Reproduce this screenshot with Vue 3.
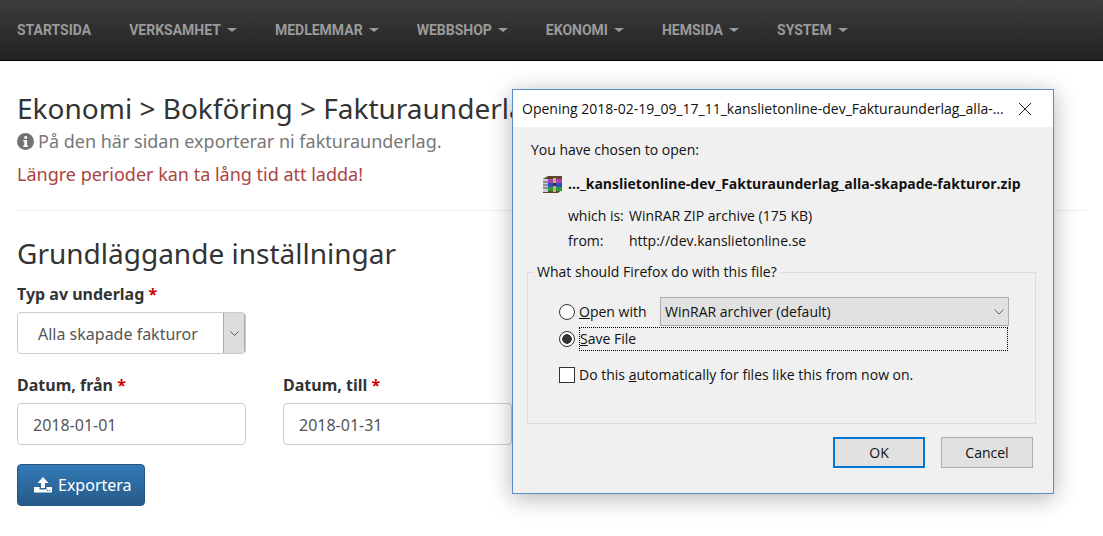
<script setup>
const navItems = [
  { label: 'STARTSIDA', caret: false },
  { label: 'VERKSAMHET', caret: true },
  { label: 'MEDLEMMAR', caret: true },
  { label: 'WEBBSHOP', caret: true },
  { label: 'EKONOMI', caret: true },
  { label: 'HEMSIDA', caret: true },
  { label: 'SYSTEM', caret: true },
]
</script>

<template>
  <div class="page">
    <nav class="navbar">
      <a v-for="item in navItems" :key="item.label" class="nav-link">
        {{ item.label }}<span v-if="item.caret" class="caret"></span>
      </a>
    </nav>

    <main class="content">
      <h1 class="title">Ekonomi &gt; Bokföring &gt; Fakturaunderlag</h1>
      <p class="lead">
        <svg class="info" viewBox="0 0 16 16" width="17" height="17">
          <circle cx="8" cy="8" r="8" fill="#737373" />
          <rect x="6.9" y="3" width="2.5" height="2.4" fill="#fff" />
          <path d="M5.9 6.5h3.5v5.2h1v1.4H5.9v-1.4h1V8H5.9z" fill="#fff" />
        </svg>
        På den här sidan exporterar ni fakturaunderlag.
      </p>
      <p class="warn">Längre perioder kan ta lång tid att ladda!</p>
      <hr class="rule" />
      <h2 class="section">Grundläggande inställningar</h2>

      <div class="field">
        <label class="label">Typ av underlag <span class="req">*</span></label>
        <div class="select">
          <span class="select-value">Alla skapade fakturor</span>
          <span class="select-arrow">
            <svg width="9" height="5" viewBox="0 0 9 5"><path d="M.5.5l4 4 4-4" fill="none" stroke="#555" /></svg>
          </span>
        </div>
      </div>

      <div class="dates">
        <div>
          <label class="label">Datum, från <span class="req">*</span></label>
          <div class="input">2018-01-01</div>
        </div>
        <div>
          <label class="label">Datum, till <span class="req">*</span></label>
          <div class="input">2018-01-31</div>
        </div>
      </div>

      <button class="btn">
        <svg width="18" height="16" viewBox="0 0 18 16">
          <path d="M9 0l5.5 6H11v5H7V6H3.500z" fill="#fff" />
          <path d="M0 10h5.500v2.500h7V10H18v5.500H0z" fill="#fff" />
          <rect x="13" y="13" width="1.200" height="1" fill="#2a6496" />
          <rect x="15" y="13" width="1.200" height="1" fill="#2a6496" />
        </svg>
        Exportera
      </button>
    </main>

    <section class="dialog">
      <header class="dlg-title">
        <span>Opening 2018-02-19_09_17_11_kanslietonline-dev_Fakturaunderlag_alla-...</span>
        <svg width="14" height="14" viewBox="0 0 14 14" class="dlg-close">
          <path d="M1 1l12 12M13 1L1 13" stroke="#222" stroke-width="1" fill="none" />
        </svg>
      </header>
      <div class="dlg-body">
        <p class="chosen">You have chosen to open:</p>
        <div class="file">
          <svg width="21" height="17" viewBox="0 0 21 17" class="rar">
            <path d="M1 3l5-3h14v14l-4 3H1z" fill="#5b4630" />
            <rect x="1" y="3" width="5" height="13" fill="#c9ccd6" />
            <path d="M1 6h5M1 9h5M1 12h5" stroke="#555" />
            <rect x="6" y="3" width="14" height="4" fill="#b03fb0" />
            <rect x="6" y="7" width="14" height="4" fill="#2f4fc0" />
            <rect x="6" y="11" width="14" height="4" fill="#2c9a3c" />
            <rect x="11" y="2" width="3" height="14" fill="#c8b070" />
            <rect x="11" y="7" width="3" height="3" fill="#3d3320" />
          </svg>
          <strong>..._kanslietonline-dev_Fakturaunderlag_alla-skapade-fakturor.zip</strong>
        </div>
        <div class="meta"><span class="meta-k">which is:</span><span>WinRAR ZIP archive (175 KB)</span></div>
        <div class="meta"><span class="meta-k">from:</span><span>http://dev.kanslietonline.se</span></div>

        <fieldset class="group">
          <legend class="legend">What should Firefox do with this file?</legend>
          <div class="row">
            <span class="radio"></span>
            <span class="opt"><u>O</u>pen with</span>
            <span class="combo">
              <span>WinRAR archiver (default)</span>
              <svg width="10" height="6" viewBox="0 0 10 6"><path d="M.5.5L5 5 9.500.5" fill="none" stroke="#666" /></svg>
            </span>
          </div>
          <div class="row row-save">
            <span class="radio radio-on"></span>
            <span class="focus"><u>S</u>ave File</span>
          </div>
          <div class="row row-check">
            <span class="check"></span>
            <span>Do this <u>a</u>utomatically for files like this from now on.</span>
          </div>
        </fieldset>

        <div class="actions">
          <span class="dbtn dbtn-ok">OK</span>
          <span class="dbtn">Cancel</span>
        </div>
      </div>
    </section>
  </div>
</template>

<style>
html, body { margin: 0; background: #fff; overflow: hidden; }
</style>

<style scoped>
.page {
  position: relative;
  width: 1103px;
  height: 536px;
  overflow: hidden;
  font-family: "Noto Sans", sans-serif;
  color: #333;
}
.navbar {
  display: flex;
  align-items: center;
  height: 60px;
  padding-left: 17px;
  gap: 38px;
  background: linear-gradient(#3c3c3c, #222);
  border-bottom: 1px solid #000;
}
.nav-link {
  font-family: "Roboto", sans-serif;
  font-weight: 700;
  font-size: 14px;
  color: #9a9a9a;
  display: flex;
  align-items: center;
}
.caret {
  margin-left: 6px;
  border-top: 4px solid #9a9a9a;
  border-left: 5px solid transparent;
  border-right: 5px solid transparent;
}
.content { padding: 29px 17px 0; }
.title {
  margin: 0;
  font-size: 28px;
  font-weight: 400;
  line-height: 36px;
  white-space: nowrap;
}
.lead {
  margin: 2px 0 0;
  font-size: 18px;
  line-height: 26px;
  color: #777;
  display: flex;
  align-items: center;
  gap: 4px;
}
.warn {
  margin: 7px 0 0;
  font-size: 18px;
  line-height: 26px;
  color: #a94442;
}
.rule {
  border: 0;
  border-top: 1px solid #eee;
  margin: 23px 0 0;
}
.section {
  margin: 24px 0 0;
  font-size: 28px;
  font-weight: 400;
  line-height: 36px;
}
.field { margin-top: 12px; }
.label {
  display: block;
  font-size: 16px;
  font-weight: 700;
  line-height: 22px;
  margin-bottom: 7px;
}
.req { color: #c00; }
.select {
  display: flex;
  width: 229px;
  height: 42px;
  box-sizing: border-box;
  border: 1px solid #ccc;
  border-radius: 4px;
  align-items: stretch;
  overflow: hidden;
  font-size: 16px;
  color: #555;
}
.select-value {
  flex: 1;
  padding-left: 20px;
  line-height: 42px;
}
.select-arrow {
  width: 20px;
  display: flex;
  align-items: center;
  justify-content: center;
  background: #ddd;
  border-left: 1px solid #aaa;
  border-right: 1px solid #aaa;
}
.dates {
  display: grid;
  grid-template-columns: 229px 229px;
  gap: 37px;
  margin-top: 20px;
}
.input {
  box-sizing: border-box;
  height: 42px;
  line-height: 42px;
  border: 1px solid #ccc;
  border-radius: 4px;
  padding-left: 15px;
  font-size: 16px;
  color: #555;
}
.btn {
  display: flex;
  align-items: center;
  gap: 6px;
  margin-top: 19px;
  width: 128px;
  height: 42px;
  box-sizing: border-box;
  padding: 0 0 0 16px;
  border: 1px solid #245580;
  border-radius: 4px;
  background: linear-gradient(#337ab7, #265a88);
  color: #fff;
  font-family: inherit;
  font-size: 16px;
}
.dialog {
  position: absolute;
  left: 512px;
  top: 89px;
  width: 542px;
  height: 405px;
  box-sizing: border-box;
  border: 1px solid #5a8cc8;
  background: #f0f0f0;
  box-shadow: 0 4px 22px rgba(0, 0, 0, .3);
  font-family: "Open Sans", sans-serif;
  font-size: 14px;
  color: #111;
  display: flex;
  flex-direction: column;
}
.dlg-title {
  height: 37px;
  flex: none;
  background: #fff;
  display: flex;
  align-items: center;
  justify-content: space-between;
  padding: 0 21px 0 9px;
  white-space: nowrap;
}
.dlg-body {
  flex: 1;
  padding: 13px 14px 0;
  display: flex;
  flex-direction: column;
}
.chosen { margin: 0 0 0 4px; line-height: 20px; }
.file {
  display: flex;
  align-items: center;
  gap: 5px;
  margin: 14px 0 0 15px;
  white-space: nowrap;
  line-height: 20px;
}
.meta {
  display: flex;
  margin: 0 0 0 41px;
  height: 25px;
  align-items: center;
}
.file + .meta { margin-top: 9px; }
.meta-k { width: 61px; }
.group {
  border: 1px solid #dcdcdc;
  margin: 10px 3px 0 0;
  padding: 0;
  height: 161px;
  box-sizing: border-box;
}
.legend { margin-left: 6px; padding: 0 4px 0 3px; line-height: 18px; }
.row { display: flex; align-items: center; position: relative; }
.row:first-of-type { margin: 16px 0 0 31px; }
.row-save { margin: 1px 0 0 31px; }
.row-check { margin: 14px 0 0 31px; }
.radio {
  width: 16px;
  height: 16px;
  box-sizing: border-box;
  border: 1px solid #333;
  border-radius: 50%;
  background: #fff;
  margin-right: 4px;
  flex: none;
}
.radio-on { background: radial-gradient(circle, #333 0 4.500px, #fff 5px); }
.opt { width: 81px; }
.combo {
  box-sizing: border-box;
  width: 349px;
  height: 29px;
  border: 1px solid #adadad;
  background: #e1e1e1;
  display: flex;
  align-items: center;
  justify-content: space-between;
  padding: 0 4px;
}
.focus {
  box-sizing: border-box;
  width: 429px;
  height: 24px;
  line-height: 22px;
  border: 1px dotted #000;
}
.check {
  width: 16px;
  height: 16px;
  box-sizing: border-box;
  border: 1px solid #333;
  background: #fff;
  margin-right: 4px;
}
.actions {
  display: flex;
  justify-content: flex-end;
  gap: 16px;
  margin-top: 13px;
  margin-right: 6px;
}
.dbtn {
  box-sizing: border-box;
  width: 92px;
  height: 31px;
  border: 1px solid #adadad;
  background: #e1e1e1;
  display: flex;
  align-items: center;
  justify-content: center;
}
.dbtn-ok { border: 2px solid #0078d7; }
</style>
